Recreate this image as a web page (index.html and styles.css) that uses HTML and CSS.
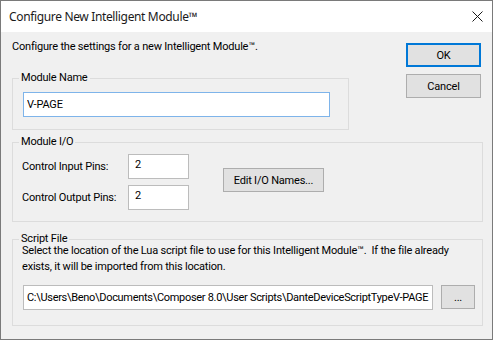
FILE: index.html
```html
<!DOCTYPE html>
<html lang="en">
<head>
  <meta charset="UTF-8" />
  <title>Configure New Intelligent Module</title>
  <link rel="stylesheet" href="styles.css">
</head>
<body>
  <div class="window">
    <div class="titlebar">
      <span class="title">Configure New Intelligent Module™</span>
      <svg class="close" width="11" height="11" viewBox="0 0 11 11">
        <path d="M0.5 0.5 L10.5 10.5 M10.5 0.5 L0.5 10.5" stroke="#1a1a1a" stroke-width="1" fill="none"/>
      </svg>
    </div>

    <div class="client">
      <div class="top">
        <div class="main">
          <p class="intro">Configure the settings for a new Intelligent Module™.</p>
          <fieldset class="group name-group">
            <legend>Module Name</legend>
            <input class="field name-field" type="text" value="V-PAGE">
          </fieldset>
        </div>
        <div class="actions">
          <button class="btn default">OK</button>
          <button class="btn">Cancel</button>
        </div>
      </div>

      <fieldset class="group io-group">
        <legend>Module I/O</legend>
        <div class="io-grid">
          <label class="io-label">Control Input Pins:</label>
          <input class="field pin" type="text" value="2">
          <label class="io-label">Control Output Pins:</label>
          <input class="field pin" type="text" value="2">
          <button class="btn edit">Edit I/O Names...</button>
        </div>
      </fieldset>

      <fieldset class="group script-group">
        <legend>Script File</legend>
        <p class="hint">Select the location of the Lua script file to use for this Intelligent Module™.&nbsp; If the file already exists, it will be imported from this location.</p>
        <div class="path-row">
          <input class="field path" type="text" value="C:\Users\Beno\Documents\Composer 8.0\User Scripts\DanteDeviceScriptTypeV-PAGE">
          <button class="btn browse">...</button>
        </div>
      </fieldset>
    </div>
  </div>
</body>
</html>
```

FILE: styles.css
```css
* { box-sizing: border-box; }

body {
  margin: 0;
  font-family: Roboto, "Noto Sans", sans-serif;
  font-size: 11px;
  letter-spacing: -0.2px;
  color: #000;
  background: #fff;
}

.window {
  width: 493px;
  height: 340px;
  border: 1px solid #7a7a7a;
  background: #f0f0f0;
  display: flex;
  flex-direction: column;
}

.titlebar {
  height: 31px;
  flex: none;
  background: #fff;
  display: flex;
  align-items: center;
  justify-content: space-between;
  padding: 0 9px 0 8px;
}

.title {
  font-family: "Noto Sans", sans-serif;
  font-size: 12px;
  letter-spacing: -0.35px;
  color: #1a1a1a;
}

.close { display: block; }

.client {
  padding: 7px 9px 0 11px;
}

.top {
  display: flex;
  justify-content: space-between;
}

.intro {
  margin: 0 0 17px;
  line-height: 16px;
}

.group {
  margin: 0;
  border: 1px solid #dcdcdc;
  min-width: 0;
}

.group legend {
  margin-left: -3px;
  padding: 0 2px;
  line-height: 12px;
}

.field {
  display: block;
  font: inherit;
  letter-spacing: inherit;
  color: #000;
  background: #fff;
  border: 1px solid #bcbcbc;
  outline: none;
  margin: 0;
}

.btn {
  font: inherit;
  letter-spacing: inherit;
  color: #000;
  background: #e1e1e1;
  border: 1px solid #adadad;
  padding: 0;
  margin: 0;
}

/* module name */
.name-group {
  width: 337px;
  padding: 8px 17px 12px 10px;
}

.name-group legend { margin-left: -4px; }

.name-field {
  width: 307px;
  height: 25px;
  padding: 0 3px;
  border-color: #7eb4ea;
}

.actions {
  display: flex;
  flex-direction: column;
  gap: 7px;
  margin: 4px 2px 0 0;
}

.actions .btn {
  width: 75px;
  height: 24px;
}

.btn.default {
  border-color: #0078d7;
  box-shadow: inset 0 0 0 1px #0078d7;
}

/* module i/o */
.io-group {
  margin-top: 6px;
  padding: 6px 0 11px 9px;
}

.io-grid {
  display: grid;
  grid-template-columns: 106px 61px auto;
  grid-template-rows: 25px 25px;
  row-gap: 6px;
  align-items: center;
}

.pin {
  width: 61px;
  height: 25px;
  padding: 1px 6px 5px;
}

.edit {
  grid-column: 3;
  grid-row: 1 / span 2;
  justify-self: start;
  align-self: start;
  width: 101px;
  height: 24px;
  margin: 14px 0 0 34px;
}

/* script file */
.script-group {
  margin-top: 11px;
  padding: 0 0 15px 9px;
}

.hint {
  margin: -2px 0 0;
  line-height: 16px;
  width: 450px;
}

.path-row {
  display: flex;
  gap: 8px;
  margin: 10px 0 0 1px;
}

.path {
  width: 410px;
  height: 25px;
  padding: 0 2px 0 3px;
  letter-spacing: -0.3px;
}

.browse {
  width: 34px;
  height: 24px;
}
```
